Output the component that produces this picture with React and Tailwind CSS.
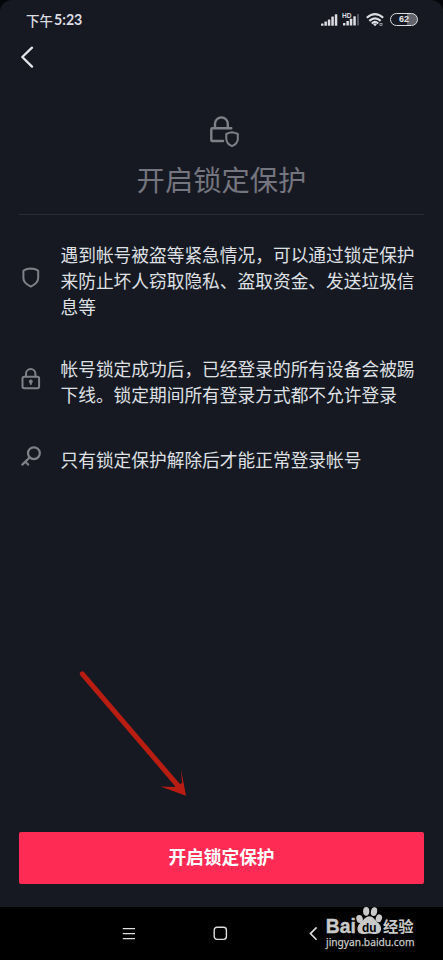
import React from 'react';

function SignalIcon() {
  return (
    <svg width="17" height="12" viewBox="0 0 17 12" fill="#dcdde2">
      <rect x="0" y="9.4" width="2.5" height="2.4" rx="0.5" />
      <rect x="3.4" y="7.6" width="2.5" height="4.2" rx="0.5" />
      <rect x="6.8" y="5.4" width="2.5" height="6.4" rx="0.5" />
      <rect x="10.3" y="2.6" width="2.5" height="9.2" rx="0.5" />
      <rect x="13.8" y="0.3" width="2.5" height="11.5" rx="0.5" />
    </svg>
  );
}

function HdSignalIcon() {
  return (
    <svg width="18" height="14" viewBox="0 0 18 14" fill="#dcdde2">
      <text x="0" y="5.6" fontSize="6.6" fontWeight="700" fontFamily="Liberation Sans, sans-serif">HD</text>
      <rect x="1" y="11" width="2.4" height="2.4" rx="0.5" />
      <rect x="4.4" y="9" width="2.5" height="4.4" rx="0.5" />
      <rect x="7.8" y="6.8" width="2.5" height="6.6" rx="0.5" />
      <rect x="11.3" y="4.2" width="2.5" height="9.2" rx="0.5" />
      <rect x="15" y="2" width="2" height="11.4" rx="0.5" fill="#54555e" />
    </svg>
  );
}

function WifiIcon() {
  return (
    <svg width="18" height="14" viewBox="0 0 18 14" fill="none" stroke="#dcdde2" strokeWidth="2.1">
      <path d="M0.8 4.8 Q9 -2.4 17.2 4.8" />
      <path d="M3.3 7.9 Q9 2.7 14.7 7.9" />
      <path d="M5.8 10.5 Q9 7.4 12.2 10.5" />
      <path d="M7 11 L9 13.2 L11 11 Q9 9.6 7 11Z" fill="#dcdde2" stroke="none" />
      <rect x="14" y="10.4" width="2" height="2.2" strokeWidth="0.8" stroke="#a5a6ae" />
    </svg>
  );
}

function StatusBar() {
  return (
    <div className="flex h-10 items-center justify-between pl-[26px] pr-[25px]">
      <div className="flex items-center text-[13.5px] font-medium leading-5 text-[#dcdde2]">
        <span>下午</span>
        <span className="ml-px font-['Lato'] text-[14.2px] font-bold">5:23</span>
      </div>
      <div className="-mt-px flex items-center">
        <SignalIcon />
        <span className="ml-1 -mt-0.5"><HdSignalIcon /></span>
        <span className="ml-[6px]"><WifiIcon /></span>
        <span className="ml-[6px] flex h-[13px] w-[28px] items-center justify-center rounded-full border-[1.5px] border-[#dcdde2] bg-gradient-to-r from-[#171922] from-60% to-[#62636b] to-60% font-['Liberation_Sans'] text-[9px] font-bold leading-none text-[#e5e6ea]">
          62
        </span>
      </div>
    </div>
  );
}

function LockShieldIcon() {
  return (
    <svg width="30" height="32" viewBox="0 0 30 32" fill="none" stroke="#7f8088" strokeWidth="2.4" strokeLinecap="round" strokeLinejoin="round">
      <path d="M5 12V7.8a6.4 6.4 0 0 1 12.8 0V12" />
      <path d="M21.3 12.2H2.3Q1.3 12.2 1.3 13.2V24Q1.3 25 2.3 25H13" />
      <path d="M22 16.3 Q25 16.7 27.8 18 V23 Q27.8 27.4 22 30.2 Q16.3 27.4 16.3 23 V18 Q19 16.7 22 16.3Z" strokeWidth="2" />
    </svg>
  );
}

function ShieldIcon() {
  return (
    <svg width="20" height="22" viewBox="0 0 20 22" fill="none" stroke="#7f8088" strokeWidth="2" strokeLinejoin="round">
      <path d="M9.8 1.6 Q14 1.8 16.8 3.4 Q17.2 3.6 17.2 4.2 V11 C17.2 15 14 17.6 9.8 19.6 C5.6 17.6 2.4 15 2.4 11 V4.2 Q2.4 3.6 2.8 3.4 Q5.6 1.8 9.8 1.6Z" />
    </svg>
  );
}

function LockIcon() {
  return (
    <svg width="20" height="22" viewBox="0 0 20 22" fill="none" stroke="#7f8088" strokeWidth="2" strokeLinecap="round">
      <path d="M5 8.6 V5.8 a4.7 4.7 0 0 1 9.4 0 V8.6" />
      <rect x="1.5" y="8.8" width="16.6" height="11.5" rx="1.8" />
      <circle cx="9.8" cy="13.4" r="1.9" fill="#7f8088" stroke="none" />
      <path d="M9.8 14 V16" />
    </svg>
  );
}

function KeyIcon() {
  return (
    <svg width="20" height="22" viewBox="0 0 20 22" fill="none" stroke="#7f8088" strokeWidth="2.2" strokeLinecap="round">
      <circle cx="12.9" cy="7.2" r="5.9" />
      <path d="M8.6 11.5 L1.3 18.6" />
      <path d="M4.6 16 L7.1 18.6" />
    </svg>
  );
}

function InfoRow({ icon, lines, className }) {
  return (
    <div className={`flex items-center ${className ?? ''}`}>
      <span className="w-[39.5px] shrink-0 pb-1">{icon}</span>
      <p className="whitespace-nowrap text-[17.72px] leading-[26px] text-[#dfe0e4]">
        {lines.map((line) => (
          <span key={line} className="block">{line}</span>
        ))}
      </p>
    </div>
  );
}

function NavBar() {
  return (
    <div className="flex h-[53px] shrink-0 items-center bg-black pl-[122px]">
      <svg width="14" height="14" viewBox="0 0 14 14" stroke="#dedede" strokeWidth="1.4">
        <path d="M0.8 1.6H13M0.8 6.6H13M0.8 11.6H13" />
      </svg>
      <svg className="ml-[77px]" width="15" height="15" viewBox="0 0 15 15" fill="none" stroke="#dedede" strokeWidth="1.4">
        <rect x="1.2" y="1.2" width="12.2" height="12.2" rx="2.8" />
      </svg>
      <svg className="ml-[81px]" width="9" height="14" viewBox="0 0 9 14" fill="none" stroke="#dedede" strokeWidth="1.6">
        <path d="M7.6 0.4 L1.4 6.6 L7.6 12.8" />
      </svg>
    </div>
  );
}

// Brand mark that sits over the navigation bar
function Watermark() {
  return (
    <svg className="absolute bottom-0 right-0" width="123" height="58" viewBox="320 902 123 58" fill="#c9c9c9">
      <text x="325.8" y="933" fontSize="20" fontWeight="700" stroke="#c9c9c9" strokeWidth="0.4" fontFamily="Liberation Sans, sans-serif" textLength="30" lengthAdjust="spacingAndGlyphs">Bai</text>
      <ellipse cx="359.6" cy="919" rx="3.2" ry="4.1" transform="rotate(-14 359.6 919)" />
      <ellipse cx="366.2" cy="911.3" rx="3.1" ry="4.4" />
      <ellipse cx="374" cy="911.6" rx="3.1" ry="4.4" transform="rotate(12 374 911.6)" />
      <ellipse cx="378.9" cy="918.3" rx="3.1" ry="4" transform="rotate(18 378.9 918.3)" />
      <path d="M369.5 916.3 C373.5 916.3 375 920.4 378.2 923 C382.8 926.8 381.8 933.8 376 934 C372 934 372 933.4 369.5 933.4 C366.5 933.4 366 934.2 362.4 934 C356.6 933.6 355.8 926.8 360.4 923 C363.8 920.2 365.2 916.3 369.5 916.3Z" />
      <text x="362" y="931.6" fontSize="12.5" fontWeight="700" fill="#000" fontFamily="Liberation Sans, sans-serif" textLength="14.5" lengthAdjust="spacingAndGlyphs">du</text>
      <text x="383" y="932" fontSize="15.3" fontWeight="700" fontFamily="Noto Sans CJK SC, sans-serif">经验</text>
      <text x="326" y="946" fontSize="11" fontFamily="Noto Sans, sans-serif" stroke="#c9c9c9" strokeWidth="0.25" textLength="88.5" lengthAdjust="spacingAndGlyphs">jingyan.baidu.com</text>
    </svg>
  );
}

function App() {
  return (
    <div className="bg-[#05060a]">
      <div className="relative flex h-[960px] w-[443px] flex-col overflow-hidden rounded-t-[12px] bg-[#171922] font-['Noto_Sans_CJK_SC',sans-serif]">
        <StatusBar />

        {/* Back button */}
        <div className="flex h-[34px] items-center pl-5">
          <svg width="15" height="22" viewBox="0 0 15 22" fill="none" stroke="#e4e5e9" strokeWidth="2.3" strokeLinecap="round" strokeLinejoin="round">
            <path d="M12 1.7 L2.3 11 L12 20.6" />
          </svg>
        </div>

        {/* Title */}
        <div className="mx-[19px] flex h-[141px] flex-col items-center border-b border-[#292b34] pt-[42px]">
          <div className="ml-1.5"><LockShieldIcon /></div>
          <h1 className="mt-[10px] whitespace-nowrap text-[28.3px] leading-[42px] text-[#74757e]">开启锁定保护</h1>
        </div>

        {/* What the lock does */}
        <div className="flex flex-1 flex-col pl-[21px] pt-[26px]">
          <InfoRow
            icon={<ShieldIcon />}
            lines={['遇到帐号被盗等紧急情况，可以通过锁定保护', '来防止坏人窃取隐私、盗取资金、发送垃圾信', '息等']}
          />
          <InfoRow
            className="mt-9"
            icon={<LockIcon />}
            lines={['帐号锁定成功后，已经登录的所有设备会被踢', '下线。锁定期间所有登录方式都不允许登录']}
          />
          <InfoRow className="mt-[39px]" icon={<KeyIcon />} lines={['只有锁定保护解除后才能正常登录帐号']} />
        </div>

        <button className="mx-[19px] mb-[23px] h-[52px] shrink-0 rounded-[2px] bg-[#fe2c55] pb-[3px] text-[17.7px] font-bold text-white">
          开启锁定保护
        </button>

        <NavBar />
        <Watermark />

        {/* Arrow pointing at the button */}
        <svg className="absolute left-[76px] top-[666px]" width="116" height="136" viewBox="76 666 116 136" fill="#b91d12">
          <path d="M82.3 673.8 L180 788" stroke="#b91d12" strokeWidth="5" strokeLinecap="round" />
          <path d="M186 795.8 L160.5 786.5 L174.5 787 L182 783 L181 769.5Z" />
        </svg>
      </div>
    </div>
  );
}

export default App;
